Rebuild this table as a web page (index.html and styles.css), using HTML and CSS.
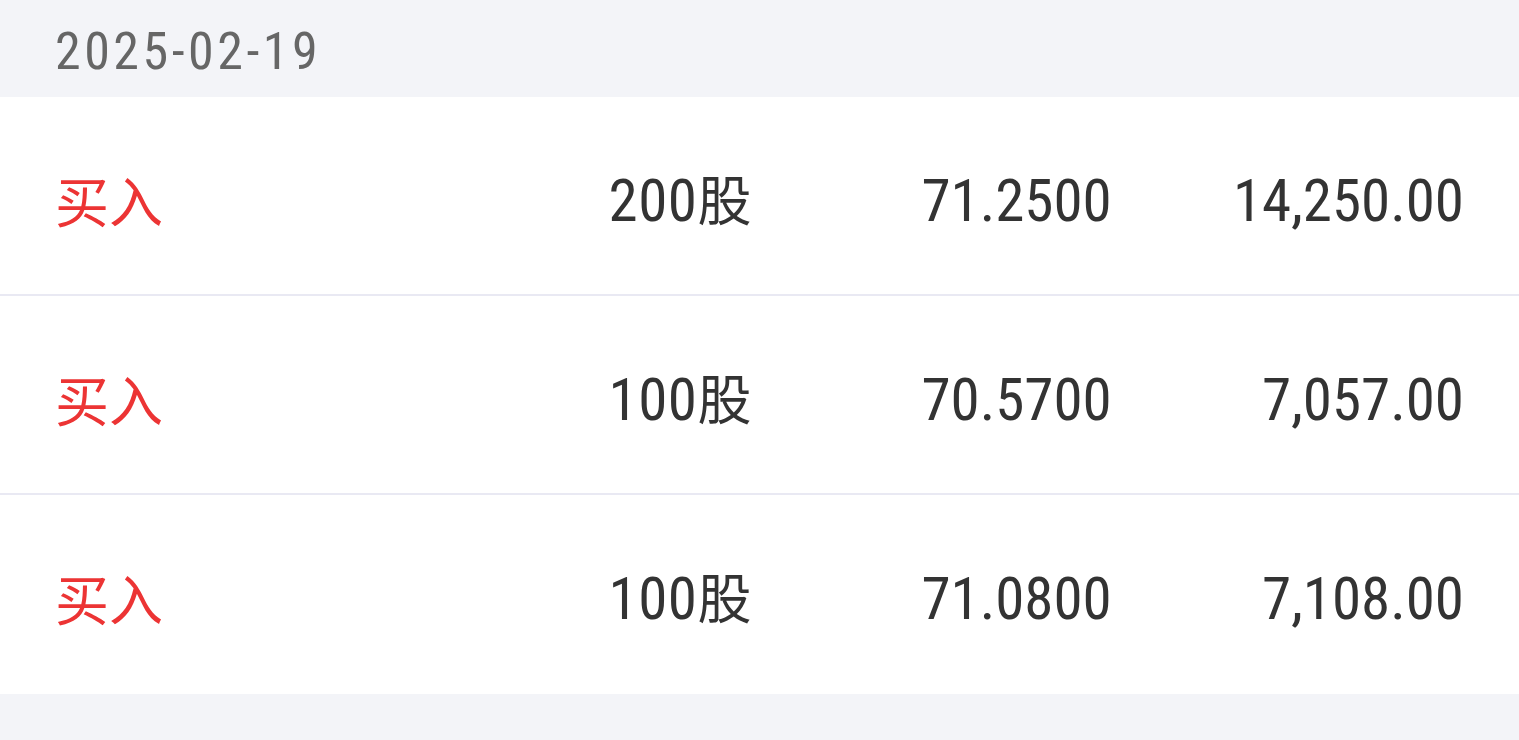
FILE: index.html
```html
<!DOCTYPE html>
<html lang="zh-CN">
<head>
<meta charset="utf-8">
<title>成交记录</title>
<link rel="stylesheet" href="styles.css">
</head>
<body>
<div class="page">
  <div class="date-bar"><span class="date">2025-02-19</span></div>
  <div class="list">
    <div class="row">
      <span class="cell type buy">买入</span>
      <span class="cell num qty">200<span class="unit">股</span></span>
      <span class="cell num">71.2500</span>
      <span class="cell num">14,250.00</span>
    </div>
    <div class="row">
      <span class="cell type buy">买入</span>
      <span class="cell num qty">100<span class="unit">股</span></span>
      <span class="cell num">70.5700</span>
      <span class="cell num">7,057.00</span>
    </div>
    <div class="row">
      <span class="cell type buy">买入</span>
      <span class="cell num qty">100<span class="unit">股</span></span>
      <span class="cell num">71.0800</span>
      <span class="cell num">7,108.00</span>
    </div>
  </div>
</div>
</body>
</html>
```

FILE: styles.css
```css
html, body {
  margin: 0;
  padding: 0;
  background: #f3f4f8;
}

.page {
  width: 1519px;
  height: 740px;
  overflow: hidden;
}

.date-bar {
  height: 97px;
  box-sizing: border-box;
  padding: 6px 55px 0;
  display: flex;
  align-items: center;
}

.date {
  font-family: "Roboto", sans-serif;
  font-stretch: 87%;
  font-size: 52px;
  letter-spacing: 3.5px;
  color: #666666;
  line-height: 1;
}

.list {
  background: #ffffff;
}

.row {
  height: 197px;
  box-sizing: content-box;
  border-bottom: 2px solid #e9e9f3;
  padding: 0 55px;
  display: grid;
  grid-template-columns: repeat(4, 1fr);
  align-items: center;
}

.row:last-child {
  border-bottom-color: #ffffff;
}

.cell {
  line-height: 1;
  padding-top: 9px;
}

.type {
  font-family: "Noto Sans CJK SC", sans-serif;
  font-size: 54px;
  text-align: left;
}

.buy {
  color: #ec3434;
}

.num {
  font-family: "Roboto", sans-serif;
  font-stretch: 87%;
  font-size: 59px;
  letter-spacing: 0;
  color: #333333;
  text-align: right;
}

.qty {
  padding-right: 8px;
  letter-spacing: 0.5px;
}

.unit {
  font-family: "Noto Sans CJK SC", sans-serif;
  font-size: 54px;
  letter-spacing: 0;
}
```
